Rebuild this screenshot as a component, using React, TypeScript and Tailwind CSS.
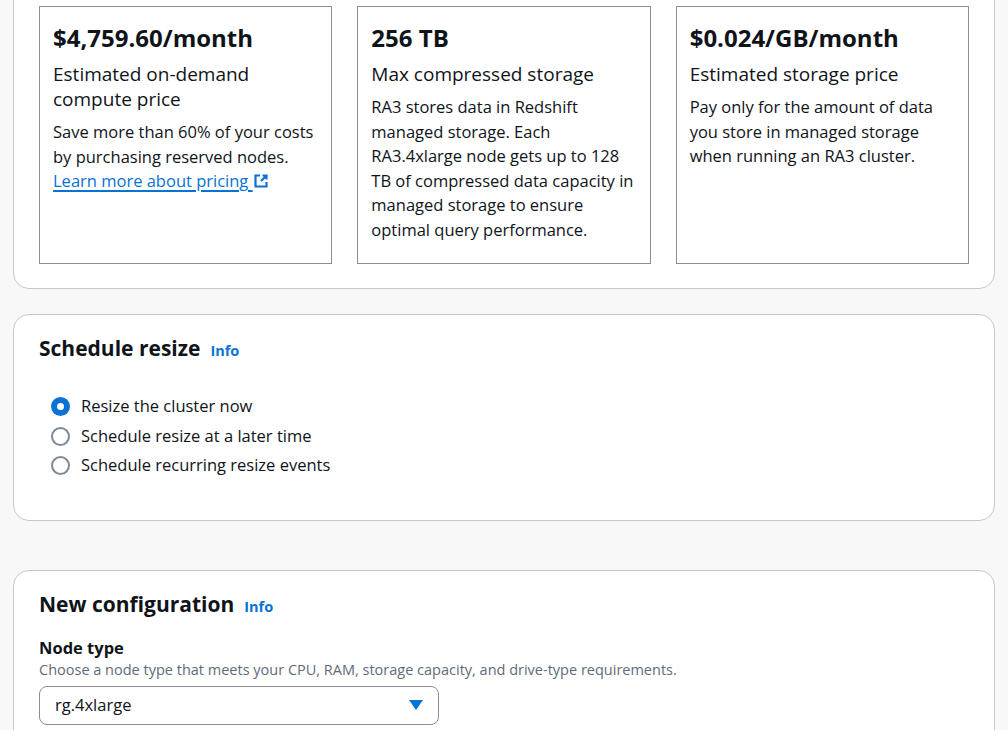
export default function App() {
  const f = { fontFamily: '"Open Sans", "Noto Sans", sans-serif' };
  const card = "border border-[#8c8c94] bg-white pt-[17px] px-[13px] h-[258px]";
  return (
    <div style={f} className="w-[1008px] h-[730px] overflow-hidden bg-[#f8f8f9] text-[#0f141a]">
      <div className="mx-[13px] mt-[-30px] h-[319px] rounded-b-[16px] border border-[#c6c6cd] bg-white px-[25px] pt-[35px]">
        <div className="grid grid-cols-3 gap-[25px]">
          <div className={card}>
            <div className="text-[24px] font-bold leading-[28px]">$4,759.60/month</div>
            <div className="mt-[10px] text-[19px] leading-[25px]">Estimated on-demand<br />compute price</div>
            <div className="mt-[8px] text-[16.5px] leading-[24.5px]">
              Save more than 60% of your costs by purchasing reserved nodes.
              <br />
              <a className="text-[#0972d3] underline decoration-[1.5px] underline-offset-[3px]">Learn more about pricing <svg className="inline -mt-[4px]" width="16" height="16" viewBox="0 0 16 16" fill="none" stroke="#0972d3" strokeWidth="2.2"><path d="M7 2.5H2.5V13.5H13.5V9" /><path d="M8 8L13.5 2.5M9.5 2.5h4v4" /></svg></a>
            </div>
          </div>
          <div className={card}>
            <div className="text-[24px] font-bold leading-[28px]">256 TB</div>
            <div className="mt-[10px] text-[19px] leading-[25px]">Max compressed storage</div>
            <div className="mt-[8px] text-[16.5px] leading-[24.5px]">RA3 stores data in Redshift managed storage. Each RA3.4xlarge node gets up to 128 TB of compressed data capacity in managed storage to ensure optimal query performance.</div>
          </div>
          <div className={card}>
            <div className="text-[24px] font-bold leading-[28px]">$0.024/GB/month</div>
            <div className="mt-[10px] text-[19px] leading-[25px]">Estimated storage price</div>
            <div className="mt-[8px] text-[16.5px] leading-[24.5px]">Pay only for the amount of data you store in managed storage when running an RA3 cluster.</div>
          </div>
        </div>
      </div>

      <div className="mx-[13px] mt-[25px] h-[207px] rounded-[16px] border border-[#c6c6cd] bg-white px-[25px] pt-[18px]">
        <div className="flex items-baseline gap-[10px]">
          <span className="text-[21px] font-bold">Schedule resize</span>
          <span className="text-[14.5px] font-bold text-[#0972d3]">Info</span>
        </div>
        <div className="mt-[30px] ml-[12px] flex flex-col gap-[5px] text-[16.5px]">
          {["Resize the cluster now", "Schedule resize at a later time", "Schedule recurring resize events"].map((t, i) => (
            <div key={t} className="flex items-center gap-[11px] h-[24.5px]">
              {i === 0 ? (
                <span className="w-[19px] h-[19px] rounded-full bg-[#0972d3] flex items-center justify-center"><span className="w-[7px] h-[7px] rounded-full bg-white" /></span>
              ) : (
                <span className="w-[19px] h-[19px] rounded-full border-2 border-[#7d8998]" />
              )}
              <span>{t}</span>
            </div>
          ))}
        </div>
      </div>

      <div className="mx-[13px] mt-[49px] h-[200px] rounded-[16px] border border-[#c6c6cd] bg-white px-[25px] pt-[18px]">
        <div className="flex items-baseline gap-[10px]">
          <span className="text-[21px] font-bold">New configuration</span>
          <span className="text-[14.5px] font-bold text-[#0972d3]">Info</span>
        </div>
        <div className="mt-[16px] text-[16.5px] font-bold leading-[22px]">Node type</div>
        <div className="text-[14.5px] text-[#5f6b7a] leading-[22px]">Choose a node type that meets your CPU, RAM, storage capacity, and drive-type requirements.</div>
        <div className="mt-[5px] w-[400px] h-[39px] rounded-[8px] border border-[#8c8c94] flex items-center justify-between px-[15px] text-[16.5px]">
          <span>rg.4xlarge</span>
          <svg width="14" height="10" viewBox="0 0 14 10"><path d="M0 0H14L7 10Z" fill="#0972d3" /></svg>
        </div>
      </div>
    </div>
  );
}
